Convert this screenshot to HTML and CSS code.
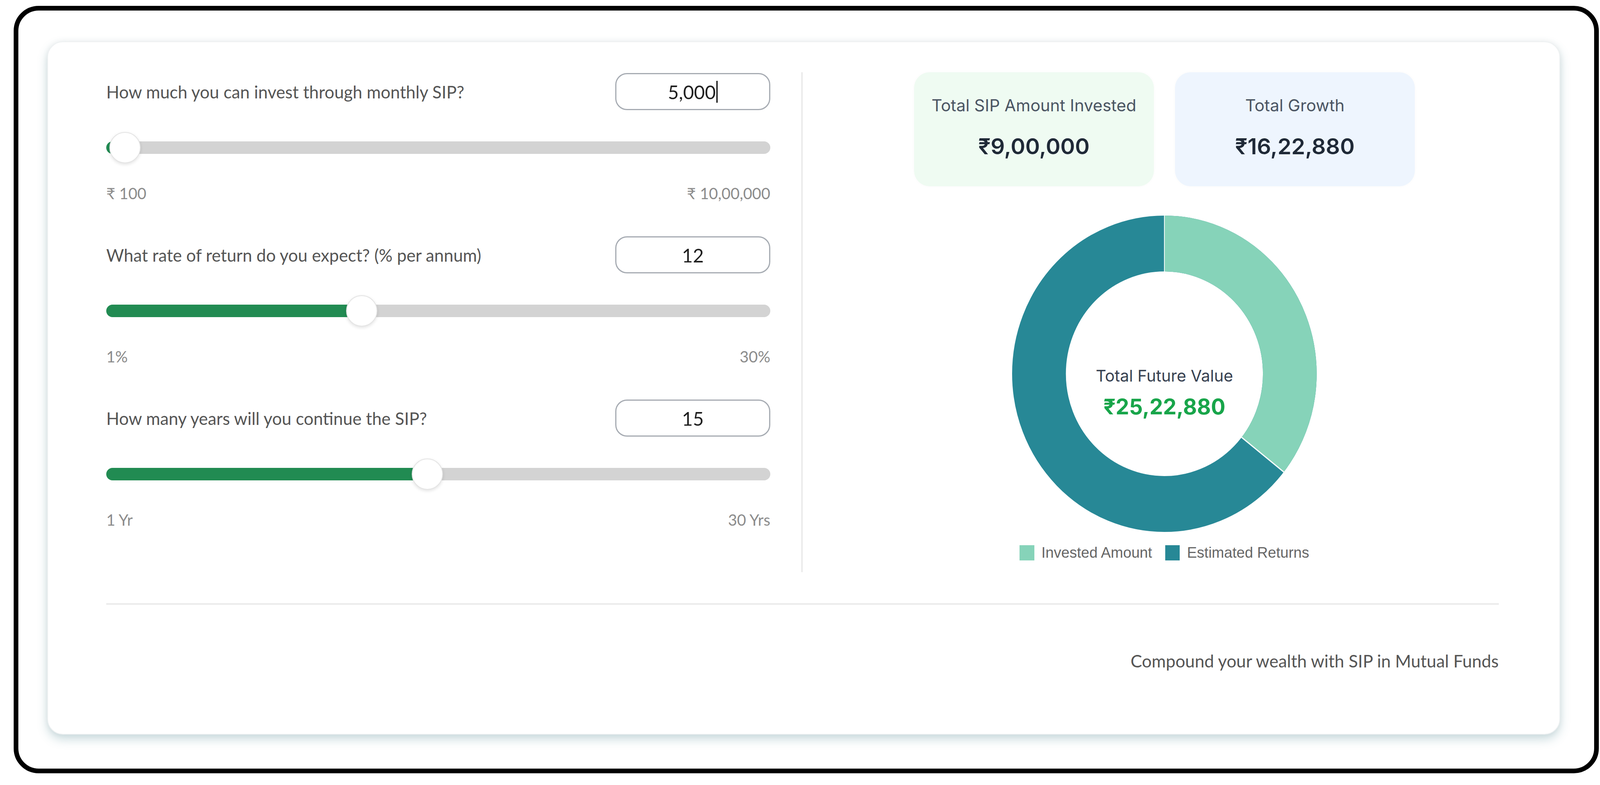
FILE: index.html
```html
<!DOCTYPE html>
<html lang="en">
<head>
<meta charset="UTF-8">
<meta name="viewport" content="width=device-width, initial-scale=1.0">
<title>SIP Calculator</title>
<link rel="stylesheet" href="styles.css">
</head>
<body>

<div class="frame">
    <div class="calculator">
        <div class="calc-main">

            <div class="inputs">
                <div class="field">
                    <div class="field-head">
                        <label for="amount">How much you can invest through monthly SIP?</label>
                        <div class="value-box">5,000<span class="caret"></span></div>
                    </div>
                    <input type="range" id="amount" class="slider" min="100" max="1000000" value="5000" style="--p: 0.0049">
                    <div class="range-labels"><span>₹ 100</span><span>₹ 10,00,000</span></div>
                </div>

                <div class="field">
                    <div class="field-head">
                        <label for="rate">What rate of return do you expect? (% per annum)</label>
                        <div class="value-box">12</div>
                    </div>
                    <input type="range" id="rate" class="slider" min="1" max="30" value="12" style="--p: 0.3793">
                    <div class="range-labels"><span>1%</span><span>30%</span></div>
                </div>

                <div class="field">
                    <div class="field-head">
                        <label for="years">How many years will you continue the SIP?</label>
                        <div class="value-box">15</div>
                    </div>
                    <input type="range" id="years" class="slider" min="1" max="30" value="15" style="--p: 0.4828">
                    <div class="range-labels"><span>1 Yr</span><span>30 Yrs</span></div>
                </div>
            </div>

            <div class="divider"></div>

            <div class="results">
                <div class="summary">
                    <div class="summary-card invested">
                        <p class="summary-title">Total SIP Amount Invested</p>
                        <p class="summary-value">₹9,00,000</p>
                    </div>
                    <div class="summary-card growth">
                        <p class="summary-title">Total Growth</p>
                        <p class="summary-value">₹16,22,880</p>
                    </div>
                </div>

                <div class="chart">
                    <svg class="donut" viewBox="0 0 810 810" preserveAspectRatio="none">
                        <circle cx="405" cy="405" r="333.5" fill="none" stroke="#278896" stroke-width="143"/>
                        <circle cx="405" cy="405" r="333.5" fill="none" stroke="#86d3b9" stroke-width="143"
                                stroke-dasharray="747.5 2095.4" transform="rotate(-90 405 405)"/>
                        <line x1="405" y1="0" x2="405" y2="143" stroke="#fff" stroke-width="2"/>
                        <line x1="610.3" y1="567.7" x2="722.4" y2="656.5" stroke="#fff" stroke-width="3"/>
                    </svg>
                    <div class="chart-center">
                        <p class="center-title">Total Future Value</p>
                        <p class="center-value">₹25,22,880</p>
                    </div>
                </div>

                <div class="legend">
                    <span class="legend-item"><span class="legend-box invested-box"></span>Invested Amount</span>
                    <span class="legend-item"><span class="legend-box returns-box"></span>Estimated Returns</span>
                </div>
            </div>

        </div>

        <hr class="rule">
        <p class="tagline">Compound your wealth with SIP in Mutual Funds</p>
    </div>
</div>

</body>
</html>
```

FILE: styles.css
```css
:root {
    /* one pixel of the 4255px wide design */
    --x: calc(100vw / 4255);
}
* {
    box-sizing: border-box;
}
body {
    margin: 0;
    background-color: #fff;
    font-family: Lato, "Noto Sans", sans-serif;
}
p {
    margin: 0;
}

/* outer black frame */
.frame {
    margin: 15px calc(3 * var(--x)) 0 calc(36 * var(--x));
    height: 1965px;
    border: 12px solid #000;
    border-radius: 64px;
    padding: 79px calc(91 * var(--x)) 0 calc(77 * var(--x));
}

/* white calculator card */
.calculator {
    height: 1775px;
    background-color: #fff;
    border: 2px solid #eef1f2;
    border-radius: 40px;
    box-shadow: 0 12px 26px rgba(70, 130, 140, 0.28), 0 0 16px rgba(0, 0, 0, 0.05);
    padding: 77px calc(161 * var(--x)) 0 calc(155 * var(--x));
}
.calc-main {
    display: flex;
    height: 1280px;
}

/* left side: inputs */
.inputs {
    flex: 0 0 calc(1766 * var(--x));
    padding-top: 2px;
}
.field + .field {
    margin-top: 88px;
}
.field-head {
    display: flex;
    justify-content: space-between;
    align-items: center;
    height: 95px;
}
.field-head label {
    font-size: calc(45.5 * var(--x));
    color: #555;
}
.value-box {
    display: flex;
    align-items: center;
    justify-content: center;
    width: calc(412 * var(--x));
    height: 95px;
    border: 3px solid #a6abb2;
    border-radius: 30px;
    font-size: calc(50 * var(--x));
    color: #1f1f1f;
}
.caret {
    display: inline-block;
    width: 3px;
    height: 56px;
    margin-left: 2px;
    background-color: #000;
}
.slider {
    -webkit-appearance: none;
    appearance: none;
    display: block;
    width: 100%;
    height: 80px;
    margin: 56px 0 0;
    background: transparent;
}
.slider::-webkit-slider-runnable-track {
    height: 32px;
    border-radius: 16px;
    background: linear-gradient(to right, #218b52 0, #218b52 calc(40px + var(--p) * (100% - 80px)), #d3d3d3 0);
}
.slider::-webkit-slider-thumb {
    -webkit-appearance: none;
    width: 80px;
    height: 80px;
    margin-top: -24px;
    border-radius: 50%;
    background-color: #fff;
    border: 2px solid #e4e4e4;
    box-shadow: 0 3px 8px rgba(0, 0, 0, 0.12);
}
.range-labels {
    display: flex;
    justify-content: space-between;
    margin-top: 55px;
    font-size: calc(41.5 * var(--x));
    line-height: 44px;
    color: #8c8c8c;
}

.divider {
    flex: 0 0 4px;
    margin-left: calc(82 * var(--x));
    background-color: #ebebeb;
}

/* right side: results */
.results {
    flex: 1;
    margin-left: calc(73 * var(--x));
    display: flex;
    flex-direction: column;
    align-items: center;
    font-family: Inter, "Noto Sans", sans-serif;
}
.summary {
    display: flex;
    gap: calc(56 * var(--x));
}
.summary-card {
    width: calc(638 * var(--x));
    height: 292px;
    border-radius: 40px;
    text-align: center;
    padding-top: 57px;
    box-shadow: 0 0 10px rgba(0, 0, 0, 0.025);
}
.summary-card.invested {
    background-color: #effbf2;
}
.summary-card.growth {
    background-color: #eef5fe;
}
.summary-title {
    font-size: calc(44 * var(--x));
    line-height: 56px;
    color: #4b5563;
}
.summary-value {
    margin-top: 42px;
    font-size: calc(59 * var(--x));
    line-height: 70px;
    font-weight: 600;
    color: #1f2937;
}

.chart {
    position: relative;
    width: calc(810 * var(--x));
    height: 810px;
    margin-top: 75px;
}
.donut {
    display: block;
    width: 100%;
    height: 100%;
}
.chart-center {
    position: absolute;
    top: 382px;
    left: 0;
    right: 0;
    text-align: center;
}
.center-title {
    font-size: calc(43 * var(--x));
    line-height: 56px;
    color: #374151;
}
.center-value {
    margin-top: 16px;
    font-size: calc(57 * var(--x));
    line-height: 70px;
    font-weight: 700;
    color: #18a54a;
}

.legend {
    display: flex;
    align-items: center;
    margin-top: 33px;
    font-family: "Liberation Sans", Arial, sans-serif;
    font-size: calc(39.5 * var(--x));
    line-height: 40px;
    color: #666;
}
.legend-item {
    display: flex;
    align-items: center;
}
.legend-item + .legend-item {
    margin-left: calc(35 * var(--x));
}
.legend-box {
    width: calc(39 * var(--x));
    height: 39px;
    margin-right: calc(19 * var(--x));
}
.invested-box {
    background-color: #86d3b9;
}
.returns-box {
    background-color: #278896;
}

/* footer */
.rule {
    margin: 80px 0 0;
    height: 3px;
    border: 0;
    background-color: #e6e6e6;
}
.tagline {
    margin-top: 114px;
    text-align: right;
    font-size: calc(45.75 * var(--x));
    line-height: 60px;
    color: #555;
}
```
